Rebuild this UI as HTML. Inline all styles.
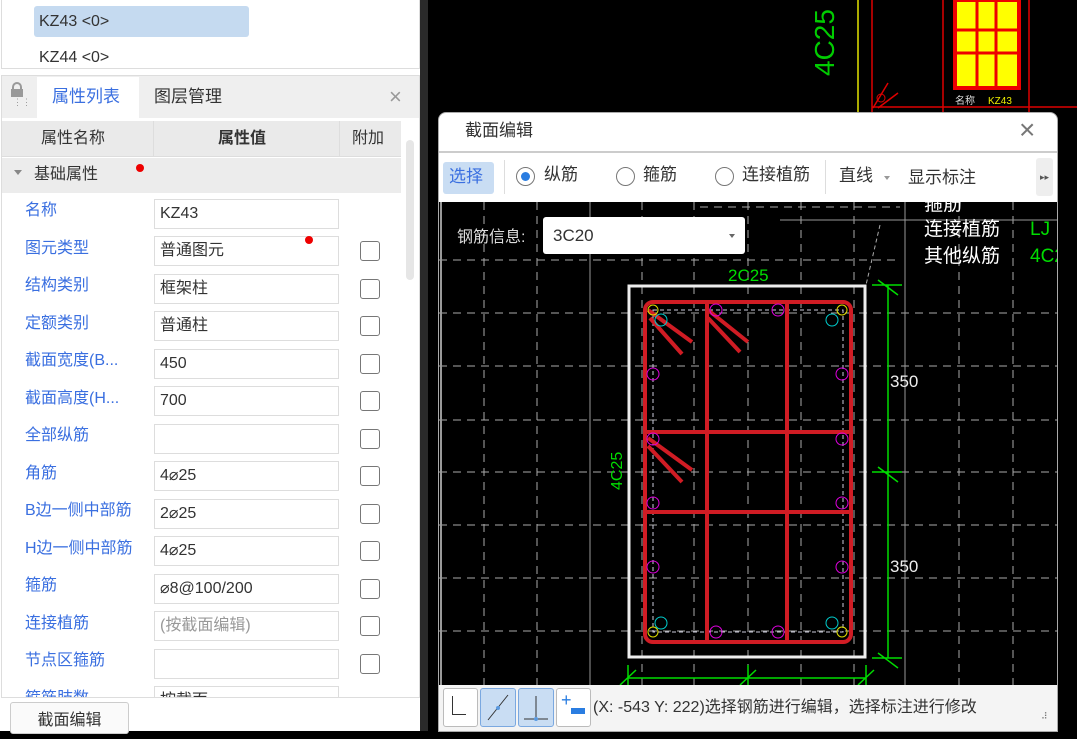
<!DOCTYPE html>
<html><head><meta charset="utf-8"><style>
*{margin:0;padding:0;box-sizing:border-box}
body{width:1077px;height:731px;overflow:hidden;background:#000;position:relative;font-family:"Liberation Sans","Noto Sans CJK SC",sans-serif;font-size:16px;color:#333;line-height:1.2}
.a{position:absolute}
.lbl{position:absolute;left:25px;color:#3a6fe0;font-size:16px;white-space:nowrap}
.inp{position:absolute;left:154px;width:185px;height:30px;border:1px solid #ddd;background:#fff;padding-left:5px;line-height:28px;font-size:16px;color:#333}
.cb{position:absolute;left:360px;width:20px;height:20px;border:1.5px solid #777;border-radius:3px;background:#fff}
.rad{position:absolute;width:19px;height:19px;border:1.5px solid #777;border-radius:50%;background:#fff}
</style></head><body>
<div class="a" style="left:0;top:0;width:426px;height:731px;background:#fff"></div>
<div class="a" style="left:420px;top:0;width:8px;height:731px;background:#2a2a2a"></div>
<div class="a" style="left:1px;top:0;width:419px;height:69px;border:1px solid #ddd;border-top:none"></div>
<div class="a" style="left:34px;top:6px;width:215px;height:31px;background:#c5daf0;border-radius:3px"></div>
<div class="a" style="left:39px;top:12px;font-size:16px">KZ43 &lt;0&gt;</div>
<div class="a" style="left:39px;top:48px;font-size:16px">KZ44 &lt;0&gt;</div>
<div class="a" style="left:1px;top:75px;width:419px;height:623px;border:1px solid #ddd;background:#fff"></div>
<div class="a" style="left:2px;top:76px;width:417px;height:42px;background:#efefef"></div>
<div class="a" style="left:37px;top:77px;width:102px;height:41px;background:#fff"></div>
<div class="a" style="left:12px;top:82px;width:10px;height:8px;border:2px solid #999;border-bottom:none;border-radius:5px 5px 0 0"></div>
<div class="a" style="left:11px;top:89px;width:12px;height:8px;background:#999"></div>
<div class="a" style="left:13px;top:100px;color:#999;font-size:9px;line-height:5px">⋮⋮</div>
<div class="a" style="left:52px;top:87px;color:#3a6fe0;font-size:17px">属性列表</div>
<div class="a" style="left:154px;top:87px;font-size:17px">图层管理</div>
<div class="a" style="left:389px;top:84px;color:#999;font-size:22px">×</div>
<div class="a" style="left:2px;top:121px;width:399px;height:36px;background:#eaeaea;border-bottom:1px solid #ddd"></div>
<div class="a" style="left:153px;top:121px;width:1px;height:36px;background:#ddd"></div>
<div class="a" style="left:339px;top:121px;width:1px;height:36px;background:#ddd"></div>
<div class="a" style="left:41px;top:129px;font-size:16px">属性名称</div>
<div class="a" style="left:218px;top:129px;font-size:16px;font-weight:bold">属性值</div>
<div class="a" style="left:352px;top:129px;font-size:16px">附加</div>
<div class="a" style="left:2px;top:158px;width:399px;height:35px;background:#ececec"></div>
<div class="a" style="left:14px;top:170px;width:0;height:0;border-left:4px solid transparent;border-right:4px solid transparent;border-top:5px solid #888"></div>
<div class="a" style="left:34px;top:165px;font-size:16px">基础属性</div>
<div class="a" style="left:136px;top:164px;width:8px;height:8px;border-radius:50%;background:#e00"></div>
<div class="a" style="left:406px;top:140px;width:8px;height:140px;background:#e6e6e6;border-radius:4px"></div>
<div class="a" style="left:0;top:193px;width:421px;height:504px;overflow:hidden">
<div class="lbl" style="top:8px">名称</div><div class="inp" style="top:6px">KZ43</div>
<div class="lbl" style="top:46px">图元类型</div><div class="inp" style="top:43px">普通图元</div><div class="cb" style="top:48px"></div>
<div class="lbl" style="top:83px">结构类别</div><div class="inp" style="top:81px">框架柱</div><div class="cb" style="top:86px"></div>
<div class="lbl" style="top:121px">定额类别</div><div class="inp" style="top:118px">普通柱</div><div class="cb" style="top:123px"></div>
<div class="lbl" style="top:158px">截面宽度(B...</div><div class="inp" style="top:156px">450</div><div class="cb" style="top:161px"></div>
<div class="lbl" style="top:196px">截面高度(H...</div><div class="inp" style="top:193px">700</div><div class="cb" style="top:198px"></div>
<div class="lbl" style="top:233px">全部纵筋</div><div class="inp" style="top:231px"></div><div class="cb" style="top:236px"></div>
<div class="lbl" style="top:271px">角筋</div><div class="inp" style="top:268px">4⌀25</div><div class="cb" style="top:273px"></div>
<div class="lbl" style="top:308px">B边一侧中部筋</div><div class="inp" style="top:306px">2⌀25</div><div class="cb" style="top:311px"></div>
<div class="lbl" style="top:346px">H边一侧中部筋</div><div class="inp" style="top:343px">4⌀25</div><div class="cb" style="top:348px"></div>
<div class="lbl" style="top:383px">箍筋</div><div class="inp" style="top:381px">⌀8@100/200</div><div class="cb" style="top:386px"></div>
<div class="lbl" style="top:421px">连接植筋</div><div class="inp" style="top:418px;color:#999">(按截面编辑)</div><div class="cb" style="top:423px"></div>
<div class="lbl" style="top:458px">节点区箍筋</div><div class="inp" style="top:456px"></div><div class="cb" style="top:461px"></div>
<div class="lbl" style="top:496px">箍筋肢数</div><div class="inp" style="top:493px">按截面</div>
</div>
<div class="a" style="left:305px;top:236px;width:8px;height:8px;border-radius:50%;background:#e00"></div>
<div class="a" style="left:10px;top:702px;width:119px;height:32px;border:1px solid #ccc;border-radius:3px;background:#fafafa;text-align:center;line-height:36px;font-size:16px">截面编辑</div>

<svg class="a" style="left:0;top:0" width="1077" height="731">
<text x="0" y="0" transform="translate(834,76) rotate(-90)" fill="#0c0" font-size="28" font-family="Liberation Sans">4C25</text>
<line x1="858" y1="0" x2="858" y2="115" stroke="#aa0" stroke-width="2"/>
<line x1="872" y1="0" x2="872" y2="115" stroke="#d00" stroke-width="1.5"/>
<line x1="943" y1="0" x2="943" y2="115" stroke="#d00" stroke-width="1.5"/>
<line x1="1029" y1="0" x2="1029" y2="115" stroke="#d00" stroke-width="1.5"/>
<line x1="872" y1="107" x2="1077" y2="107" stroke="#d00" stroke-width="1.5"/>
<rect x="955" y="0" width="64" height="88" fill="#ff0" stroke="#e00" stroke-width="4"/>
<path d="M977 0V86M996 0V86M955 30H1019M955 53H1019" stroke="#e00" stroke-width="3"/>
<circle cx="881" cy="98" r="4" fill="none" stroke="#d00"/>
<path d="M873 108L888 83M878 108L898 93" stroke="#d00" stroke-width="1.5"/>
<text x="955" y="104" fill="#ddd" font-size="10">名称</text><text x="988" y="104" fill="#ee0" font-size="10">KZ43</text>
</svg>

<div class="a" style="left:438px;top:112px;width:620px;height:620px;background:#fff;border-radius:8px 8px 0 0;border:1px solid #aaa"></div>
<div class="a" style="left:465px;top:121px;font-size:17px;color:#333">截面编辑</div>
<div class="a" style="left:1019px;top:113px;font-size:28px;color:#777;font-weight:300">×</div>
<div class="a" style="left:439px;top:151px;width:618px;height:2px;background:#ccc"></div>
<div class="a" style="left:443px;top:162px;width:51px;height:32px;background:#c9ddf3;border-radius:3px"></div>
<div class="a" style="left:449px;top:167px;font-size:17px;color:#3a6fe0">选择</div>
<div class="a" style="left:504px;top:160px;width:1px;height:34px;background:#ddd"></div>
<div class="rad" style="left:516px;top:167px"></div><div class="a" style="left:521px;top:172px;width:9px;height:9px;border-radius:50%;background:#2a7de1"></div>
<div class="a" style="left:544px;top:165px;font-size:17px">纵筋</div>
<div class="rad" style="left:616px;top:167px"></div>
<div class="a" style="left:643px;top:165px;font-size:17px">箍筋</div>
<div class="rad" style="left:715px;top:167px"></div>
<div class="a" style="left:742px;top:165px;font-size:17px">连接植筋</div>
<div class="a" style="left:825px;top:160px;width:1px;height:34px;background:#ddd"></div>
<div class="a" style="left:839px;top:166px;font-size:17px">直线</div>
<div class="a" style="left:884px;top:176px;border-left:3px solid transparent;border-right:3px solid transparent;border-top:4px solid #999"></div>
<div class="a" style="left:908px;top:168px;font-size:17px">显示标注</div>
<div class="a" style="left:1036px;top:158px;width:17px;height:38px;background:#eee;border-radius:3px;font-size:9px;color:#555;line-height:38px;text-align:center">▸▸</div>

<svg class="a" style="left:439px;top:202px" width="618" height="483" viewBox="439 202 618 483">
<rect x="439" y="202" width="618" height="483" fill="#000"/>
<g stroke="#aaa" stroke-width="1" stroke-dasharray="8,6">
<path d="M439 313H1057M439 366H1057M439 420H1057M439 472H1057M439 525H1057M439 578H1057M439 631H1057M439 260H900M700 207H900"/>
<path d="M484 202V685M537 202V685M642 202V685M694 202V685M748 202V685M801 202V685M854 202V685M959 202V685M1013 202V685"/>
</g>
<path d="M590 202V685M905 202V685M780 220H1057" stroke="#999" stroke-width="1"/>
<path d="M441 202V685" stroke="#999" stroke-width="2"/>
<path d="M880 225L866 285" stroke="#aaa" stroke-dasharray="4,3"/>
<text x="924" y="235" fill="#fff" font-size="19">连接植筋</text><text x="1030" y="235" fill="#0d0" font-size="19">LJ</text>
<text x="924" y="262" fill="#fff" font-size="19">其他纵筋</text><text x="1030" y="262" fill="#0d0" font-size="19">4C2</text>
<text x="924" y="210" fill="#fff" font-size="19">箍筋</text>
<text x="728" y="281" fill="#0d0" font-size="17">2C25</text>
<rect x="629" y="286" width="236" height="371" fill="none" stroke="#eee" stroke-width="3"/>
<rect x="653" y="310" width="190" height="322" fill="none" stroke="#ccd" stroke-width="1" stroke-dasharray="4,3"/>
<g stroke="#d01c24" stroke-width="4" fill="none">
<rect x="645" y="302" width="206" height="340" rx="8"/>
<path d="M707 302V642M787 302V642M645 432H851M645 512H851"/>
<path d="M648 310L692 342M650 318L682 354M708 310L748 342M708 318L740 352M648 438L692 470M648 446L682 482"/>
</g>
<g fill="none" stroke-width="1">
<g stroke="#d0d">
<circle cx="716" cy="310" r="6"/><circle cx="778" cy="310" r="6"/><circle cx="716" cy="632" r="6"/><circle cx="778" cy="632" r="6"/>
<circle cx="653" cy="374" r="6"/><circle cx="653" cy="439" r="6"/><circle cx="653" cy="503" r="6"/><circle cx="653" cy="567" r="6"/>
<circle cx="842" cy="374" r="6"/><circle cx="842" cy="439" r="6"/><circle cx="842" cy="503" r="6"/><circle cx="842" cy="567" r="6"/>
</g>
<g stroke="#0cc"><circle cx="661" cy="320" r="6"/><circle cx="832" cy="320" r="6"/><circle cx="661" cy="623" r="6"/><circle cx="832" cy="623" r="6"/></g>
<g stroke="#dd0"><circle cx="653" cy="310" r="5"/><circle cx="842" cy="310" r="5"/><circle cx="653" cy="632" r="5"/><circle cx="842" cy="632" r="5"/></g>
</g>
<g stroke="#0d0" stroke-width="1.5">
<path d="M888 285V658M872 285H902M872 472H902M872 658H902M878 280L898 295M878 467L898 482M878 653L898 668"/>
<path d="M628 678H866M628 665V685M748 665V685M866 665V685M620 685L636 670M740 685L756 670M858 685L874 670"/>
</g>
<text x="890" y="387" fill="#eee" font-size="17">350</text>
<text x="890" y="572" fill="#eee" font-size="17">350</text>
<text transform="translate(622,490) rotate(-90)" fill="#0d0" font-size="16">4C25</text>
</svg>
<div class="a" style="left:457px;top:228px;color:#ddd;font-size:16px">钢筋信息:</div>
<div class="a" style="left:543px;top:217px;width:202px;height:37px;background:#fff;border-radius:3px;padding-left:10px;line-height:37px;font-size:17px;color:#333">3C20</div>
<div class="a" style="left:729px;top:234px;border-left:3px solid transparent;border-right:3px solid transparent;border-top:4px solid #666"></div>

<div class="a" style="left:439px;top:685px;width:618px;height:46px;background:#f4f4f4"></div>
<div class="a" style="left:443px;top:688px;width:35px;height:39px;border:1px solid #bbb;border-radius:3px;background:#fff"></div>
<div class="a" style="left:452px;top:696px;width:14px;height:19px;border-left:1px solid #333;border-bottom:1px solid #333"></div>
<div class="a" style="left:480px;top:688px;width:36px;height:39px;border:1px solid #7aa8e0;border-radius:3px;background:#c9ddf3"></div>
<svg class="a" style="left:480px;top:688px" width="36" height="39"><path d="M8 32L28 7" stroke="#333"/><circle cx="18" cy="20" r="2" fill="#5a9ae0"/></svg>
<div class="a" style="left:518px;top:688px;width:36px;height:39px;border:1px solid #7aa8e0;border-radius:3px;background:#c9ddf3"></div>
<svg class="a" style="left:518px;top:688px" width="36" height="39"><path d="M18 8V31M6 31H30" stroke="#333"/><circle cx="18" cy="31" r="2" fill="#5a9ae0"/></svg>
<div class="a" style="left:556px;top:688px;width:35px;height:39px;border:1px solid #bbb;border-radius:3px;background:#fff"></div>
<div class="a" style="left:561px;top:690px;color:#2a7de1;font-size:18px">+</div>
<div class="a" style="left:571px;top:708px;width:14px;height:6px;background:#2a7de1"></div>
<div class="a" style="left:593px;top:698px;font-size:16px;color:#333;white-space:nowrap;width:435px;overflow:hidden">(X: -543 Y: 222)选择钢筋进行编辑，选择标注进行修改</div>
<div class="a" style="left:1041px;top:711px;color:#777;font-size:9px">⠼</div>
</body></html>
